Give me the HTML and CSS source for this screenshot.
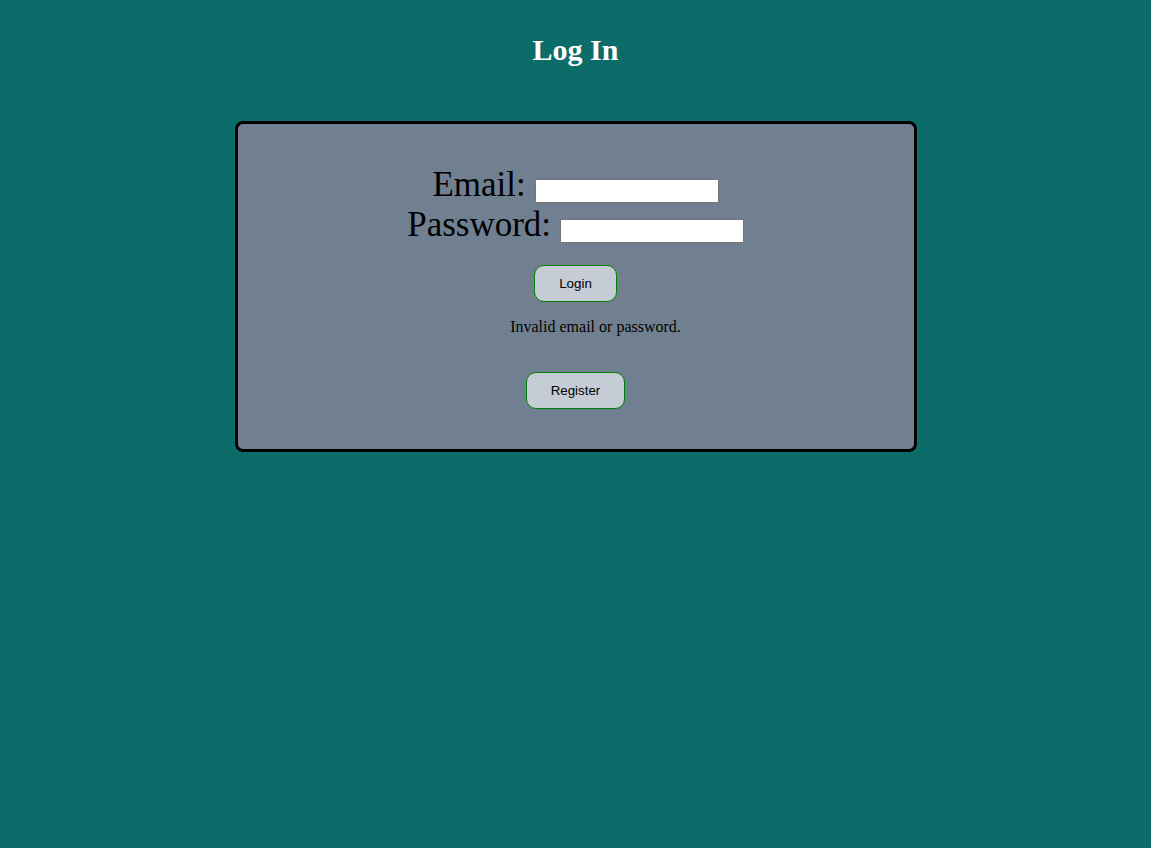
FILE: index.html
```html
<!DOCTYPE html>
<html>
<head>
<meta charset="utf-8">
<title>Log In</title>
<link rel="stylesheet" href="styles.css">
</head>
<body>
<h1 class="title">Log In</h1>
<div class="card">
  <form class="form">
    <div class="row"><label class="label">Email:</label> <input class="field" type="text"></div>
    <div class="row"><label class="label">Password:</label> <input class="field" type="password"></div>
    <div class="actions"><button class="btn" type="button">Login</button></div>
  </form>
  <ul class="errors"><li>Invalid email or password.</li></ul>
  <div class="actions reg"><button class="btn" type="button">Register</button></div>
</div>
</body>
</html>
```

FILE: styles.css
```css
html, body {
  background: #0b6c6a;
}
body {
  margin: 8px;
  font-family: "Liberation Serif", "Times New Roman", serif;
}
.title {
  margin: 25px 0 55px;
  font-size: 30px;
  line-height: 33px;
  color: #ffffff;
  text-align: center;
  font-weight: bold;
}
.card {
  width: 682px;
  margin: 0 auto;
  box-sizing: border-box;
  background: #708090;
  border: 3px solid #000;
  border-radius: 8px;
  padding: 41px 0 40px;
  text-align: center;
}
.form {
  margin: 0;
}
.row {
  font-size: 35px;
  line-height: 40px;
}
.label {
  color: #000;
}
.field {
  box-sizing: border-box;
  width: 184px;
  height: 24px;
  border: 1px solid #767676;
  padding: 2px 3px;
  font-family: "Liberation Sans", Arial, sans-serif;
  font-size: 16px;
  background: #fff;
  vertical-align: baseline;
}
.actions {
  margin-top: 20px;
}
.btn {
  font-family: "Liberation Sans", Arial, sans-serif;
  font-size: 13.333px;
  line-height: 15px;
  padding: 10px 24px;
  background: #c5ccd6;
  border: 1px solid #008000;
  border-radius: 10px;
  color: #000;
}
.errors {
  list-style: none;
  margin: 16px 0 0;
  padding: 0 0 0 40px;
  font-size: 16px;
  color: #000;
}
.reg {
  margin-top: 36px;
}
```
